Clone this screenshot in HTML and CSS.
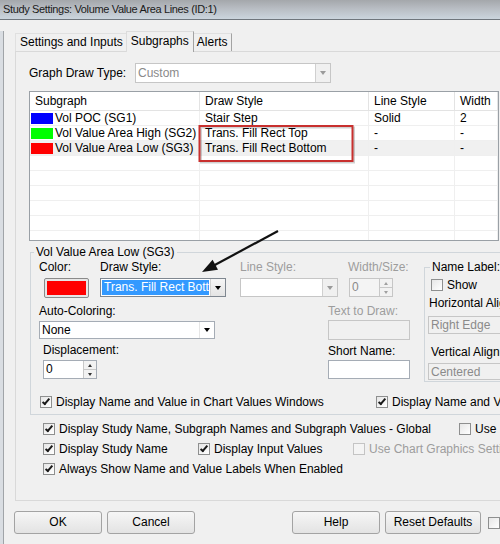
FILE: index.html
```html
<!DOCTYPE html>
<html lang="en">
<head>
    <meta charset="UTF-8">
    <meta name="viewport" content="width=device-width, initial-scale=1.0">
    <title>Study Settings: Volume Value Area Lines (ID:1)</title>
    <link rel="stylesheet" href="styles.css">
</head>
<body>
    <!-- Window caption -->
    <div class="titlebar">Study Settings: Volume Value Area Lines (ID:1)</div>

    <div class="window">
        <div class="tabs">
            <span class="tab">Settings and Inputs</span>
            <span class="tab active">Subgraphs</span>
            <span class="tab">Alerts</span>
        </div>

        <div class="panel">
            <div class="draw-type">
                <span class="draw-type-label">Graph Draw Type:</span>
                <div class="combo disabled graph-type">
                    <span class="combo-value">Custom</span>
                    <span class="combo-drop"></span>
                </div>
            </div>

            <!-- Subgraph list -->
            <div class="list">
                <div class="list-head">
                    <span>Subgraph</span>
                    <span>Draw Style</span>
                    <span>Line Style</span>
                    <span>Width</span>
                </div>
                <div class="list-row">
                    <span class="sg"><i class="swatch blue"></i>Vol POC (SG1)</span>
                    <span>Stair Step</span>
                    <span>Solid</span>
                    <span>2</span>
                </div>
                <div class="list-row">
                    <span class="sg"><i class="swatch green"></i>Vol Value Area High (SG2)</span>
                    <span>Trans. Fill Rect Top</span>
                    <span>-</span>
                    <span>-</span>
                </div>
                <div class="list-row selected">
                    <span class="sg"><i class="swatch red"></i>Vol Value Area Low (SG3)</span>
                    <span>Trans. Fill Rect Bottom</span>
                    <span>-</span>
                    <span>-</span>
                </div>
                <div class="list-row"><span></span><span></span><span></span><span></span></div>
                <div class="list-row"><span></span><span></span><span></span><span></span></div>
                <div class="list-row"><span></span><span></span><span></span><span></span></div>
                <div class="list-row"><span></span><span></span><span></span><span></span></div>
                <div class="list-row"><span></span><span></span><span></span><span></span></div>
                <div class="list-row"><span></span><span></span><span></span><span></span></div>
            </div>

            <!-- Selected subgraph settings -->
            <fieldset class="group">
                <legend>Vol Value Area Low (SG3)</legend>
                <div class="group-body">
                    <div class="group-top">
                        <div class="group-left">
                            <div class="fields">
                                <div class="field field-color">
                                    <span class="label">Color:</span>
                                    <span class="color-btn"><span class="color-fill"></span></span>
                                </div>
                                <div class="field field-draw">
                                    <span class="label">Draw Style:</span>
                                    <div class="combo draw-style">
                                        <span class="combo-value"><span class="selected-text">Trans. Fill Rect Bottom</span></span>
                                        <span class="combo-drop"></span>
                                    </div>
                                </div>
                                <div class="field field-line">
                                    <span class="label disabled-text">Line Style:</span>
                                    <div class="combo disabled line-style">
                                        <span class="combo-value"></span>
                                        <span class="combo-drop"></span>
                                    </div>
                                </div>
                                <div class="field field-width">
                                    <span class="label disabled-text">Width/Size:</span>
                                    <div class="spin disabled width-spin">
                                        <span class="spin-value">0</span>
                                        <span class="spin-arrows"><span class="up"></span><span class="down"></span></span>
                                    </div>
                                </div>
                            </div>

                            <div class="fields-2">
                                <div class="col-left">
                                    <span class="label">Auto-Coloring:</span>
                                    <div class="combo auto-color">
                                        <span class="combo-value">None</span>
                                        <span class="combo-drop"></span>
                                    </div>
                                    <span class="label displacement-label">Displacement:</span>
                                    <div class="spin displacement">
                                        <span class="spin-value">0</span>
                                        <span class="spin-arrows"><span class="up"></span><span class="down"></span></span>
                                    </div>
                                </div>
                                <div class="col-right">
                                    <span class="label disabled-text">Text to Draw:</span>
                                    <div class="textbox disabled text-draw"></div>
                                    <span class="label short-label">Short Name:</span>
                                    <div class="textbox short-name"></div>
                                </div>
                            </div>
                        </div>

                        <fieldset class="name-group">
                            <legend>Name Label:</legend>
                            <label class="check show-check"><span class="cb"></span>Show</label>
                            <span class="label h-align">Horizontal Alignment:</span>
                            <div class="combo disabled align-combo h-combo">
                                <span class="combo-value">Right Edge</span>
                            </div>
                            <span class="label v-align">Vertical Alignment:</span>
                            <div class="combo disabled align-combo v-combo">
                                <span class="combo-value">Centered</span>
                            </div>
                        </fieldset>
                    </div>

                    <div class="group-checks">
                        <label class="check chart-values"><span class="cb on"></span>Display Name and Value in Chart Values Windows</label>
                        <label class="check"><span class="cb on"></span>Display Name and Value Labels</label>
                    </div>
                </div>
            </fieldset>

            <div class="globals">
                <div class="global-row">
                    <label class="check g-wide"><span class="cb on"></span>Display Study Name, Subgraph Names and Subgraph Values - Global</label>
                    <label class="check"><span class="cb"></span>Use</label>
                </div>
                <div class="global-row">
                    <label class="check g-col"><span class="cb on"></span>Display Study Name</label>
                    <label class="check g-col"><span class="cb on"></span>Display Input Values</label>
                    <label class="check disabled-text"><span class="cb disabled"></span>Use Chart Graphics Settings</label>
                </div>
                <div class="global-row">
                    <label class="check"><span class="cb on"></span>Always Show Name and Value Labels When Enabled</label>
                </div>
            </div>
        </div>

        <div class="buttons">
            <span class="btn">OK</span>
            <span class="btn">Cancel</span>
            <span class="btn btn-help">Help</span>
            <span class="btn btn-reset">Reset Defaults</span>
            <span class="cb bottom-check"></span>
        </div>
    </div>

    <!-- Screenshot annotations -->
    <svg class="annot" width="500" height="544" viewBox="0 0 500 544">
        <rect x="201" y="127.5" width="153" height="35" fill="none" stroke="rgba(0,0,0,0.18)" stroke-width="2"/>
        <rect x="199.5" y="126" width="153" height="35" fill="none" stroke="#c8302e" stroke-width="2"/>
        <line x1="278" y1="231" x2="212" y2="266.5" stroke="#111" stroke-width="2.2"/>
        <polygon points="202,272 218,269.8 212.6,259.8" fill="#111"/>
    </svg>
</body>
</html>
```

FILE: styles.css
```css
body {
    margin: 0;
    width: 500px;
    height: 544px;
    overflow: hidden;
    position: relative;
    background-color: #f0f0f0;
    font-family: 'Liberation Sans', Arial, sans-serif;
    font-size: 12px;
    color: #000;
}

/* Caption bar */
.titlebar {
    height: 19px;
    line-height: 19px;
    padding-left: 3px;
    font-size: 11px;
    letter-spacing: -0.35px;
    color: #1a1a1a;
    white-space: nowrap;
    background: linear-gradient(#a4a7ab 0%, #b8bdc3 45%, #cbd5de 100%);
    border-bottom: 1px solid #6f767d;
}

.window {
    margin-left: 3px;
    height: 524px;
    border-left: 1px solid #a0a4a8;
    box-shadow: -3px 0 0 #d9dde2;
}

/* Tabs */
.tabs {
    display: flex;
    align-items: flex-end;
    height: 20px;
    margin: 11px 0 0 11px;
}

.tab {
    box-sizing: border-box;
    height: 18px;
    line-height: 16px;
    padding: 0 4px;
    border: 1px solid #e0e0e0;
    border-bottom: none;
    white-space: nowrap;
}

.tab.active {
    height: 21px;
    line-height: 19px;
    margin: 0 -2px -1px -2px;
    position: relative;
    z-index: 1;
    background-color: #f0f0f0;
    border-color: #dcdcdc;
    border-right-color: #a3a3a3;
}

.tab:last-child {
    border-right-color: #a3a3a3;
}

.panel {
    width: 520px;
    margin-left: 11px;
    padding: 11px 0 21px 13px;
    border: 1px solid #d9d9d9;
}

/* Graph draw type */
.draw-type {
    display: flex;
    align-items: center;
    height: 20px;
}

.draw-type-label {
    width: 106px;
    white-space: nowrap;
}

.graph-type {
    width: 196px;
    height: 20px;
    background-color: #f6f6f6;
}

/* Combo boxes */
.combo {
    display: flex;
    box-sizing: border-box;
    border: 1px solid #a5acb5;
    background-color: #fff;
}

.combo-value {
    flex: 1;
    display: flex;
    align-items: center;
    padding-left: 2px;
    overflow: hidden;
    white-space: nowrap;
}

.combo-drop {
    width: 14px;
    flex-shrink: 0;
    display: flex;
    align-items: center;
    justify-content: center;
    border-left: 1px solid #d2d2d2;
    background: linear-gradient(#f6f6f6, #e4e4e4);
}

.combo-drop::after {
    content: '';
    border-left: 3.5px solid transparent;
    border-right: 3.5px solid transparent;
    border-top: 4px solid #000;
}

.combo.disabled {
    border-color: #c6c6c6;
    color: #8a8a8a;
}

.combo.disabled .combo-drop {
    background: #f0f0f0;
    border-left-color: #d0d0d0;
}

.combo.disabled .combo-drop::after {
    border-top-color: #9a9a9a;
}

/* Subgraph list */
.list {
    box-sizing: border-box;
    width: 470px;
    height: 150px;
    margin-top: 8px;
    border: 1px solid #9aa0a6;
    background-color: #fff;
    overflow: hidden;
}

.list-head,
.list-row {
    display: grid;
    grid-template-columns: 170px 169px 86px 43px;
}

.list-head span,
.list-row span {
    box-sizing: border-box;
    padding-left: 5px;
    white-space: nowrap;
    overflow: hidden;
}

.list-head span {
    height: 19px;
    line-height: 19px;
    border-right: 1px solid #e3e3e3;
    border-bottom: 1px solid #e3e3e3;
}

.list-row span {
    height: 15px;
    line-height: 14px;
    border-right: 1px solid #efefef;
    border-bottom: 1px solid #efefef;
}

.list-row.selected {
    background-color: #f0f0f0;
}

.list-row .sg {
    display: flex;
    align-items: flex-start;
    padding-left: 1px;
}

.swatch {
    display: block;
    width: 22px;
    height: 11px;
    margin: 2px 2px 0 0;
    flex-shrink: 0;
}

.swatch.blue { background-color: #0000ff; }
.swatch.green { background-color: #00ff00; }
.swatch.red { background-color: #ff0000; }

/* Group boxes */
fieldset {
    margin: 0;
    padding: 0;
    min-width: 0;
    border: 1px solid #d0d6db;
}

legend {
    padding: 0 2px;
    line-height: 14px;
    white-space: nowrap;
}

.group {
    width: 500px;
    margin: 4px 0 0 1px;
}

.group > legend {
    margin-left: 3px;
}

.group-body {
    padding: 1px 0 5px 8px;
}

.group-top {
    display: flex;
    align-items: flex-start;
}

.group-left {
    width: 385px;
    flex-shrink: 0;
}

.label {
    display: block;
    height: 14px;
    line-height: 14px;
    white-space: nowrap;
}

.disabled-text {
    color: #9d9d9d;
}

.fields {
    display: flex;
}

.field {
    flex-shrink: 0;
}

.field .label {
    margin-bottom: 4px;
}

.field-color { width: 61px; }
.field-draw { width: 140px; }
.field-line { width: 108px; }
.field-width { width: 60px; }

.color-btn {
    display: block;
    box-sizing: border-box;
    width: 45px;
    height: 20px;
    margin-left: 5px;
    padding: 2px;
    border: 1px solid #8a8a8a;
    border-radius: 2px;
    background-color: #e6e6e6;
}

.color-fill {
    display: block;
    height: 100%;
    background-color: #ff0000;
}

.draw-style {
    width: 126px;
    height: 19px;
    border-color: #7f8790;
}

.draw-style .combo-value {
    padding: 1px;
}

.selected-text {
    display: block;
    width: 100%;
    height: 15px;
    line-height: 15px;
    padding-left: 2px;
    overflow: hidden;
    color: #fff;
    background-color: #3399ff;
}

.line-style {
    width: 98px;
    height: 19px;
}

/* Spin boxes */
.spin {
    display: flex;
    box-sizing: border-box;
    height: 19px;
    border: 1px solid #a5acb5;
    background-color: #fff;
}

.spin-value {
    flex: 1;
    padding-left: 2px;
    line-height: 17px;
}

.spin-arrows {
    width: 12px;
    display: flex;
    flex-direction: column;
    border-left: 1px solid #c8c8c8;
}

.spin-arrows span {
    flex: 1;
    display: flex;
    align-items: center;
    justify-content: center;
    background-color: #f2f2f2;
}

.spin-arrows .up {
    border-bottom: 1px solid #c8c8c8;
}

.spin-arrows .up::after {
    content: '';
    border-left: 2.5px solid transparent;
    border-right: 2.5px solid transparent;
    border-bottom: 3px solid #333;
}

.spin-arrows .down::after {
    content: '';
    border-left: 2.5px solid transparent;
    border-right: 2.5px solid transparent;
    border-top: 3px solid #333;
}

.spin.disabled {
    border-color: #c6c6c6;
    color: #8a8a8a;
    background-color: #f4f4f4;
}

.spin.disabled .spin-arrows span::after {
    border-top-color: #a0a0a0;
    border-bottom-color: #a0a0a0;
}

.width-spin {
    width: 44px;
    margin-left: 1px;
}

.fields-2 {
    display: flex;
    margin-top: 6px;
}

.col-left {
    width: 289px;
    flex-shrink: 0;
}

.auto-color {
    width: 176px;
    height: 18px;
    margin-top: 3px;
}

.auto-color .combo-drop {
    background: #fff;
    border-left-color: #e6e6e6;
}

.displacement-label {
    margin: 4px 0 0 4px;
}

.displacement {
    width: 54px;
    margin: 3px 0 0 4px;
}

.textbox {
    box-sizing: border-box;
    width: 82px;
    border: 1px solid #a5acb5;
    background-color: #fff;
}

.textbox.disabled {
    border-color: #c6c6c6;
    background-color: #f0f0f0;
}

.text-draw {
    height: 20px;
    margin-top: 2px;
}

.short-label {
    margin-top: 4px;
}

.short-name {
    height: 19px;
    margin-top: 2px;
}

/* Name label group */
.name-group {
    width: 120px;
    flex-shrink: 0;
    padding: 0 0 1px 3px;
}

.name-group > legend {
    margin-left: 2px;
}

.show-check {
    height: 14px;
    margin: 4px 0 0 3px;
}

.h-align {
    margin: 4px 0 0 1px;
}

.align-combo {
    width: 100px;
    background-color: #f0f0f0;
}

.h-combo {
    height: 18px;
    margin-top: 6px;
}

.v-align {
    margin: 11px 0 0 3px;
}

.v-combo {
    height: 17px;
    margin-top: 4px;
}

/* Checkboxes */
.check {
    display: flex;
    align-items: center;
    gap: 4px;
    flex-shrink: 0;
    white-space: nowrap;
}

.cb {
    box-sizing: border-box;
    width: 12px;
    height: 12px;
    flex-shrink: 0;
    position: relative;
    border: 1px solid #8e8f8f;
    background: linear-gradient(135deg, #e6e6e6, #ffffff);
}

.cb.on::after {
    content: '';
    position: absolute;
    left: 3px;
    top: 0;
    width: 2px;
    height: 6px;
    border: solid #1a1a1a;
    border-width: 0 2px 2px 0;
    transform: rotate(40deg);
}

.cb.disabled {
    border-color: #c4c4c4;
    background: #f4f4f4;
}

.group-checks {
    display: flex;
    height: 14px;
    margin: 13px 0 0 1px;
}

.chart-values {
    width: 336px;
}

/* Global options */
.globals {
    margin-top: 4px;
    padding-left: 14px;
}

.global-row {
    display: flex;
    height: 20px;
}

.g-wide {
    width: 416px;
}

.g-col {
    width: 155px;
}

/* Dialog buttons */
.buttons {
    display: flex;
    align-items: center;
    margin-top: 10px;
    padding-left: 10px;
}

.btn {
    box-sizing: border-box;
    width: 88px;
    height: 23px;
    flex-shrink: 0;
    line-height: 21px;
    text-align: center;
    white-space: nowrap;
    border: 1px solid #a3a3a3;
    border-radius: 3px;
    background: linear-gradient(#f6f6f6, #e3e3e3);
}

.btn + .btn {
    margin-left: 5px;
}

.btn.btn-help {
    margin-left: 97px;
}

.btn-reset {
    width: 96px;
}

.bottom-check {
    margin-left: 7px;
}

/* Red box and arrow drawn over the screenshot */
.annot {
    position: absolute;
    top: 0;
    left: 0;
    pointer-events: none;
}
```
